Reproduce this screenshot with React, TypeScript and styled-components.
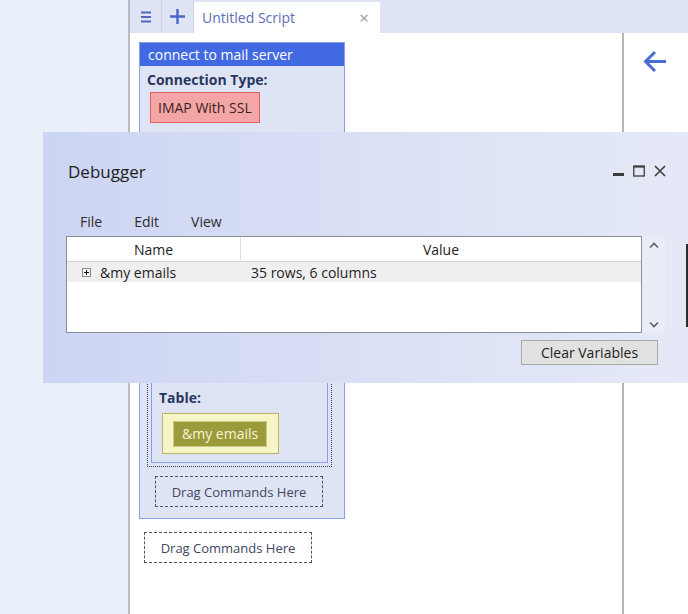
import React from "react";
import styled, { createGlobalStyle } from "styled-components";

const GlobalStyle = createGlobalStyle`
  html, body {
    margin: 0;
    padding: 0;
    overflow: hidden;
  }
  body {
    font-family: "Open Sans", "Noto Sans", "Liberation Sans", sans-serif;
    color: #1e1e1e;
  }
`;

const Frame = styled.div`
  position: relative;
  display: flex;
  width: 688px;
  height: 614px;
  overflow: hidden;
`;

const Sidebar = styled.div`
  width: 128px;
  flex-shrink: 0;
  background: #eaf0fa;
  border-right: 2px solid #b9bcc4;
`;

const Workspace = styled.div`
  flex: 1;
  display: flex;
  flex-direction: column;
  min-width: 0;
`;

const TabBar = styled.div`
  height: 33px;
  flex-shrink: 0;
  display: flex;
  align-items: stretch;
  background: #dfe4f4;
`;

const ToolButton = styled.div`
  width: 31px;
  display: flex;
  align-items: center;
  justify-content: center;
  border-right: 1px solid #cdd3e8;
  color: #4a66c8;
`;

const Tab = styled.div`
  margin-top: 2px;
  width: 186px;
  display: flex;
  align-items: center;
  justify-content: space-between;
  padding: 0 11px 0 8px;
  box-sizing: border-box;
  background: #ffffff;
  color: #5b6db8;
  font-size: 14px;
`;

const TabClose = styled.span`
  color: #9a9a9a;
  font-size: 17px;
  line-height: 1;
`;

const Body = styled.div`
  flex: 1;
  display: flex;
`;

const Editor = styled.div`
  flex: 1;
  background: #ffffff;
  border-right: 2px solid #b6b6b6;
  padding: 9px 0 0 9px;
`;

const SidePanel = styled.div`
  width: 64px;
  flex-shrink: 0;
  background: #ffffff;
  padding: 17px 0 0 19px;
  box-sizing: border-box;
`;

const Block = styled.div<{ $width: number }>`
  width: ${(p) => p.$width}px;
  box-sizing: border-box;
  background: #dfe4f5;
  border: 1px solid #8aa0e4;
`;

const BlockHeader = styled.div`
  background: #4169e1;
  color: #ffffff;
  font-size: 14px;
  height: 23px;
  line-height: 23px;
  padding-left: 8px;
`;

const BlockBody = styled.div<{ $pad: string }>`
  padding: ${(p) => p.$pad};
`;

const FieldLabel = styled.div`
  font-weight: 700;
  font-size: 14px;
  color: #28375f;
  line-height: 20px;
`;

const Field = styled.div`
  & + & {
    margin-top: 8px;
  }
`;

const EnumPill = styled.div`
  display: inline-block;
  margin: 2px 0 0 3px;
  padding: 0 7px;
  height: 29px;
  line-height: 29px;
  background: #f4a6a6;
  border: 1px solid #e35e5e;
  color: #3a1e1e;
  font-size: 14px;
`;

const VarHolder = styled.div`
  display: inline-block;
  margin: 5px 0 0 3px;
  padding: 7px 11px 6px 10px;
  background: #f6f5c6;
  border: 1px solid #b9b56c;
`;

const VarChip = styled.div`
  height: 24px;
  line-height: 24px;
  padding: 0 8px;
  background: #9b9b3c;
  border: 1px solid #c9c98a;
  color: #f6f6d8;
  font-size: 14px;
`;

const NestWrap = styled.div`
  margin-top: 49px;
  padding: 3px;
  border: 1px dotted #333a55;
`;

const DropZone = styled.div<{ $left: number; $top: number }>`
  width: 168px;
  height: 31px;
  box-sizing: border-box;
  margin: ${(p) => p.$top}px 0 0 ${(p) => p.$left}px;
  border: 1px dashed #4d5470;
  display: flex;
  align-items: center;
  justify-content: center;
  color: #3f4662;
  font-size: 13px;
`;

const Debugger = styled.div`
  position: absolute;
  left: 43px;
  top: 132px;
  width: 645px;
  height: 251px;
  box-sizing: border-box;
  background: linear-gradient(90deg, #ccd5f3 0%, #dbe1f5 55%, #e5e9f7 100%);
  display: flex;
  flex-direction: column;
  padding: 0 0 0 23px;
`;

const TitleRow = styled.div`
  height: 78px;
  display: flex;
  align-items: center;
  padding: 0 22px 0 2px;
`;

const Title = styled.div`
  flex: 1;
  font-size: 17px;
  color: #1e1e1e;
`;

const Controls = styled.div`
  display: flex;
  align-items: center;
  gap: 9px;
  color: #3a3a3a;
`;

const MenuBar = styled.div`
  display: flex;
  height: 26px;
  align-items: center;
  padding: 0 0 4px 14px;
  margin-top: -2px;
  font-size: 14px;
  color: #2e2e2e;
`;

const MenuItem = styled.span`
  margin-right: 32px;
`;

const GridRow = styled.div`
  display: flex;
  margin-top: -2px;
`;

const Grid = styled.div`
  width: 576px;
  height: 97px;
  box-sizing: border-box;
  background: #ffffff;
  border: 1px solid #8a8e99;
  font-size: 14px;
`;

const GridHead = styled.div`
  display: grid;
  grid-template-columns: 174px 1fr;
  height: 24px;
  border-bottom: 1px solid #d4d4d4;
`;

const HeadCell = styled.div<{ $divider?: boolean }>`
  display: flex;
  align-items: center;
  justify-content: center;
  border-right: ${(p) => (p.$divider ? "1px solid #dedede" : "none")};
  color: #1e1e1e;
`;

const DataRow = styled.div`
  display: grid;
  grid-template-columns: 174px 1fr;
  height: 20px;
  align-items: center;
  background: #efefef;
`;

const NameCell = styled.div`
  display: flex;
  align-items: center;
  gap: 9px;
  padding-left: 15px;
`;

const ValueCell = styled.div`
  padding-left: 10px;
`;

const ExpandBox = styled.span`
  width: 9px;
  height: 9px;
  box-sizing: border-box;
  border: 1px solid #8c8c8c;
  background: #f4f4f4;
  position: relative;
  &::before,
  &::after {
    content: "";
    position: absolute;
    background: #111;
  }
  &::before {
    left: 1px;
    right: 1px;
    top: 3px;
    height: 1px;
  }
  &::after {
    top: 1px;
    bottom: 1px;
    left: 3px;
    width: 1px;
  }
`;

const ScrollBar = styled.div`
  width: 23px;
  height: 97px;
  background: #e9edf7;
  display: flex;
  flex-direction: column;
  justify-content: space-between;
  align-items: center;
  padding: 6px 0 5px;
  box-sizing: border-box;
`;

const Footer = styled.div`
  display: flex;
  justify-content: flex-end;
  padding: 7px 30px 0 0;
`;

const ClearButton = styled.div`
  width: 137px;
  height: 25px;
  box-sizing: border-box;
  background: #e1e1e1;
  border: 1px solid #a9a9a9;
  display: flex;
  align-items: center;
  justify-content: center;
  font-size: 14px;
  color: #1e1e1e;
`;

const EdgeMark = styled.div`
  position: absolute;
  right: 0;
  top: 244px;
  width: 2px;
  height: 83px;
  background: #2c2c2c;
`;

const Chevron = ({ up }: { up?: boolean }) => (
  <svg width="10" height="7" viewBox="0 0 10 7">
    <path
      d={up ? "M1 5.5 L5 1.5 L9 5.5" : "M1 1.5 L5 5.5 L9 1.5"}
      fill="none"
      stroke="#606060"
      strokeWidth="1.6"
    />
  </svg>
);

export default function App() {
  return (
    <>
      <GlobalStyle />
      <Frame>
        <Sidebar />
        <Workspace>
          <TabBar>
            <ToolButton>
              <svg width="10" height="12" viewBox="0 0 10 12">
                <path d="M0 1.5h10M0 6h10M0 10.5h10" stroke="#5468c0" strokeWidth="2" />
              </svg>
            </ToolButton>
            <ToolButton>
              <svg width="15" height="15" viewBox="0 0 15 15">
                <path d="M7.5 0v15M0 7.5h15" stroke="#4a66c8" strokeWidth="2.4" />
              </svg>
            </ToolButton>
            <Tab>
              <span>Untitled Script</span>
              <TabClose>×</TabClose>
            </Tab>
          </TabBar>
          <Body>
            <Editor>
              <Block $width={206}>
                <BlockHeader>connect to mail server</BlockHeader>
                <BlockBody $pad="4px 12px 11px 7px">
                  <FieldLabel>Connection Type:</FieldLabel>
                  <EnumPill>IMAP With SSL</EnumPill>
                  <NestWrap>
                    <Block $width={177}>
                      <BlockHeader>read emails</BlockHeader>
                      <BlockBody $pad="5px 8px 8px 7px">
                        <Field>
                          <FieldLabel>Folder:</FieldLabel>
                          <EnumPill>INBOX</EnumPill>
                        </Field>
                        <Field>
                          <FieldLabel>Mark As Read:</FieldLabel>
                          <EnumPill>No</EnumPill>
                        </Field>
                        <Field>
                          <FieldLabel>Maximum:</FieldLabel>
                          <EnumPill>All</EnumPill>
                        </Field>
                        <Field>
                          <FieldLabel>Table:</FieldLabel>
                          <VarHolder>
                            <VarChip>&amp;my emails</VarChip>
                          </VarHolder>
                        </Field>
                      </BlockBody>
                    </Block>
                  </NestWrap>
                  <DropZone $left={8} $top={9}>Drag Commands Here</DropZone>
                </BlockBody>
              </Block>
              <DropZone $left={5} $top={13}>Drag Commands Here</DropZone>
            </Editor>
            <SidePanel>
              <svg width="24" height="23" viewBox="0 0 24 23">
                <path
                  d="M23 11.5H3M12 2 L2.5 11.5 L12 21"
                  fill="none"
                  stroke="#4a6cd4"
                  strokeWidth="3"
                />
              </svg>
            </SidePanel>
          </Body>
        </Workspace>

        <Debugger>
          <TitleRow>
            <Title>Debugger</Title>
            <Controls>
              <svg width="11" height="12" viewBox="0 0 11 12">
                <rect x="0" y="8" width="11" height="3" fill="#3c3c3c" />
              </svg>
              <svg width="12" height="12" viewBox="0 0 12 12">
                <rect x="0.75" y="1" width="10.5" height="10" fill="none" stroke="#3c3c3c" strokeWidth="1.3" />
                <rect x="0.75" y="1" width="10.5" height="1.6" fill="#3c3c3c" />
              </svg>
              <svg width="12" height="12" viewBox="0 0 12 12">
                <path d="M1 1L11 11M11 1L1 11" stroke="#3c3c3c" strokeWidth="1.6" />
              </svg>
            </Controls>
          </TitleRow>
          <MenuBar>
            <MenuItem>File</MenuItem>
            <MenuItem>Edit</MenuItem>
            <MenuItem>View</MenuItem>
          </MenuBar>
          <GridRow>
            <Grid>
              <GridHead>
                <HeadCell $divider>Name</HeadCell>
                <HeadCell>Value</HeadCell>
              </GridHead>
              <DataRow>
                <NameCell>
                  <ExpandBox />
                  <span>&amp;my emails</span>
                </NameCell>
                <ValueCell>35 rows, 6 columns</ValueCell>
              </DataRow>
            </Grid>
            <ScrollBar>
              <Chevron up />
              <Chevron />
            </ScrollBar>
          </GridRow>
          <Footer>
            <ClearButton>Clear Variables</ClearButton>
          </Footer>
        </Debugger>
        <EdgeMark />
      </Frame>
    </>
  );
}
